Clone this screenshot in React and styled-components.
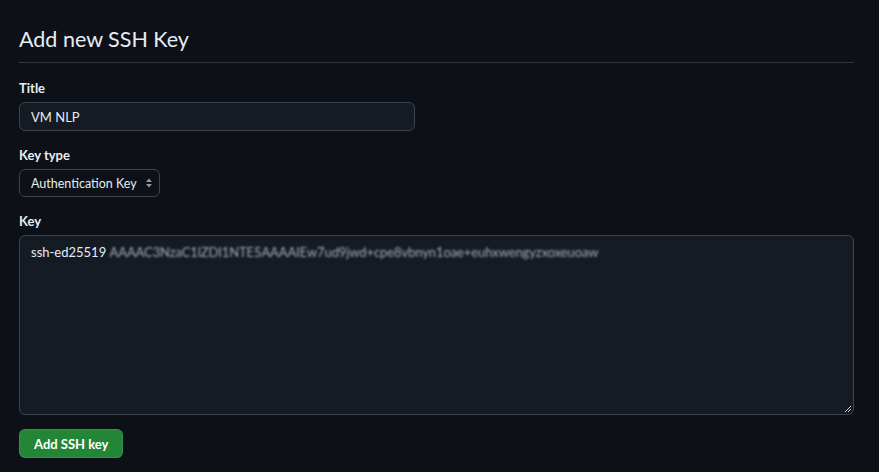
import React from "react";
import styled, { createGlobalStyle } from "styled-components";

const GlobalStyle = createGlobalStyle`
  html, body {
    margin: 0;
    padding: 0;
    background-color: #0d1117;
  }
  body {
    font-family: "Lato", "Liberation Sans", sans-serif;
    color: #e6edf3;
  }
`;

const Page = styled.div`
  width: 879px;
  height: 472px;
  box-sizing: border-box;
  padding: 24px 25px 0 19px;
  background-color: #0d1117;
  overflow: hidden;
`;

const Subhead = styled.div`
  border-bottom: 1px solid #30363d;
  padding-bottom: 8px;
  margin-bottom: 15px;
`;

const Heading = styled.h2`
  margin: 0;
  font-size: 21.5px;
  font-weight: 400;
  line-height: 30px;
  color: #e6edf3;
`;

const Field = styled.div`
  display: flex;
  flex-direction: column;
  align-items: flex-start;
  margin-bottom: 14px;
`;

const Label = styled.label`
  font-size: 13px;
  font-weight: 700;
  line-height: 20px;
  margin-bottom: 4px;
`;

const TextInput = styled.input`
  width: 396px;
  height: 29px;
  box-sizing: border-box;
  padding: 0 11px;
  background-color: #151b23;
  border: 1px solid #3d444d;
  border-radius: 6px;
  color: #e6edf3;
  font-family: inherit;
  font-size: 13px;
  outline: none;
`;

const SelectBox = styled.div`
  display: flex;
  align-items: center;
  gap: 8px;
  height: 28px;
  box-sizing: border-box;
  padding: 0 6px 0 11px;
  border: 1px solid #3d444d;
  border-radius: 6px;
  background-color: #0d1117;
  font-size: 12.5px;
`;

const KeyArea = styled.div`
  position: relative;
  width: 835px;
  height: 180px;
  box-sizing: border-box;
  padding: 6px 11px;
  background-color: #151b23;
  border: 1px solid #3d444d;
  border-radius: 6px;
  font-size: 13px;
  line-height: 20px;
  white-space: nowrap;
`;

const Blurred = styled.span`
  display: inline-block;
  filter: blur(1.3px);
  color: #a3acb7;
  letter-spacing: -0.1px;
`;

const Grip = styled.svg`
  position: absolute;
  right: 1px;
  bottom: 1px;
`;

const Button = styled.button`
  height: 29px;
  padding: 0 14px;
  background-color: #238636;
  border: 1px solid rgba(240, 246, 252, 0.1);
  border-radius: 6px;
  color: #ffffff;
  font-family: inherit;
  font-size: 13px;
  font-weight: 700;
`;

export default function App() {
  return (
    <Page>
      <GlobalStyle />
      <Subhead>
        <Heading>Add new SSH Key</Heading>
      </Subhead>
      <Field>
        <Label>Title</Label>
        <TextInput defaultValue="VM NLP" />
      </Field>
      <Field>
        <Label>Key type</Label>
        <SelectBox>
          Authentication Key
          <svg width="8" height="12" viewBox="0 0 8 12">
            <path d="M4 1.5 L7 5 H1 Z" fill="#9198a1" />
            <path d="M4 10.5 L7 7 H1 Z" fill="#9198a1" />
          </svg>
        </SelectBox>
      </Field>
      <Field>
        <Label>Key</Label>
        <KeyArea>
          ssh-ed25519{" "}
          <Blurred>AAAAC3NzaC1lZDI1NTE5AAAAIEw7ud9jwd+cpe8vbnyn1oae+euhxwengyzxoxeuoaw</Blurred>
          <Grip width="9" height="9" viewBox="0 0 9 9">
            <path d="M8 2 L2 8 M8 5 L5 8" stroke="#c9d1d9" strokeWidth="1" />
          </Grip>
        </KeyArea>
      </Field>
      <Button>Add SSH key</Button>
    </Page>
  );
}
